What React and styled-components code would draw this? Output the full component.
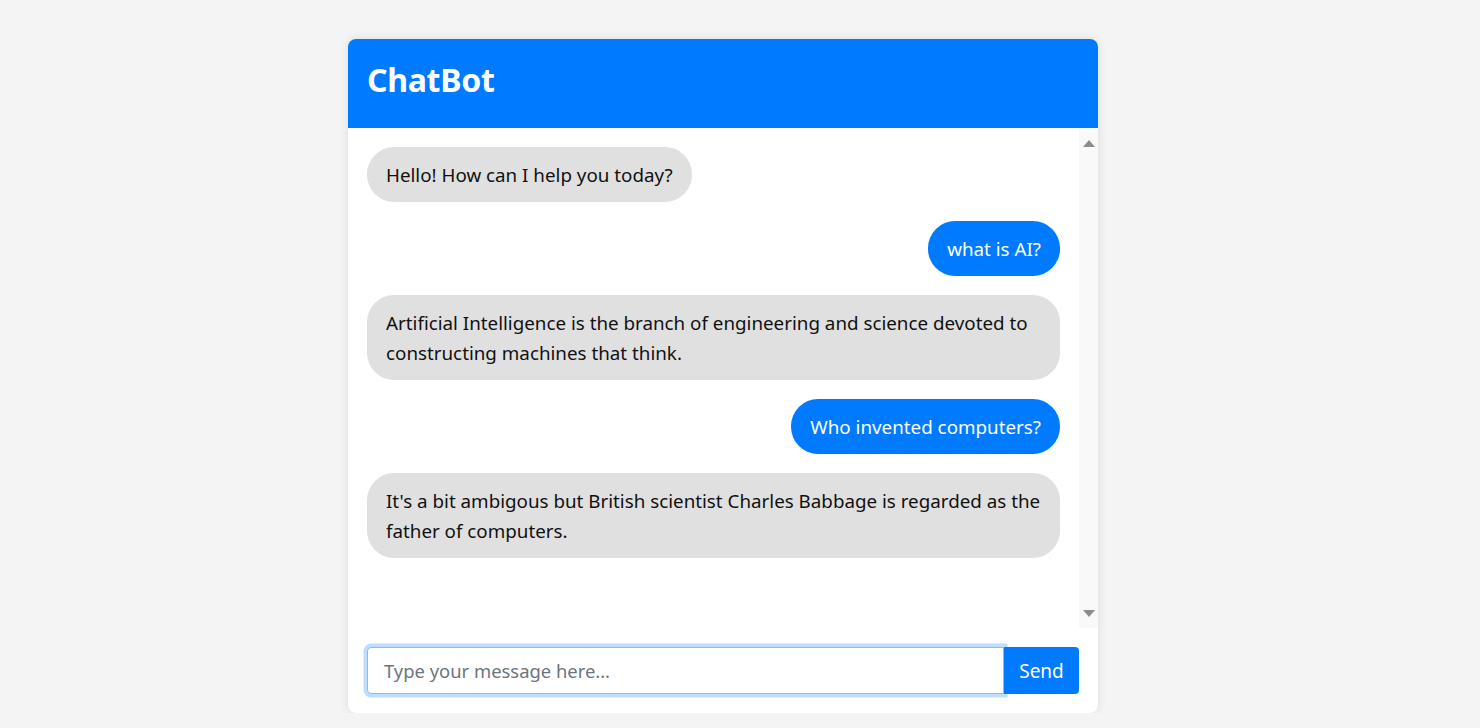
import React, { useState } from 'react';
import styled, { createGlobalStyle } from 'styled-components';

const initialMessages = [
  { id: 1, from: 'bot', text: 'Hello! How can I help you today?' },
  { id: 2, from: 'user', text: 'what is AI?' },
  {
    id: 3,
    from: 'bot',
    text: 'Artificial Intelligence is the branch of engineering and science devoted to constructing machines that think.',
  },
  { id: 4, from: 'user', text: 'Who invented computers?' },
  {
    id: 5,
    from: 'bot',
    text: "It's a bit ambigous but British scientist Charles Babbage is regarded as the father of computers.",
  },
];

const App = () => {
  const [messages] = useState(initialMessages);
  const [draft, setDraft] = useState('');

  return (
    <>
      <GlobalStyle />
      <Page>
        <Card>
          <Header>
            <Title>ChatBot</Title>
          </Header>
          <Body>
            <MessageList>
              {messages.map((m) => (
                <Row key={m.id} $user={m.from === 'user'}>
                  <Bubble $user={m.from === 'user'}>{m.text}</Bubble>
                </Row>
              ))}
            </MessageList>
            <Track>
              <Arrow $dir="up" />
              <Arrow $dir="down" />
            </Track>
          </Body>
          <Composer onSubmit={(e) => e.preventDefault()}>
            <Input
              autoFocus
              placeholder="Type your message here..."
              value={draft}
              onChange={(e) => setDraft(e.target.value)}
            />
            <SendButton type="submit">Send</SendButton>
          </Composer>
        </Card>
      </Page>
    </>
  );
};

const GlobalStyle = createGlobalStyle`
  body {
    margin: 0;
    background: #f4f4f4;
    font-family: 'Noto Sans', 'Open Sans', sans-serif;
  }
`;

const Page = styled.div`
  display: flex;
  justify-content: center;
  padding: 39px 34px 0 0;
`;

const Card = styled.div`
  width: 750px;
  background: #fff;
  border-radius: 8px;
  overflow: hidden;
  box-shadow: 0 0 10px rgba(0, 0, 0, 0.1);
`;

const Header = styled.div`
  background: #007bff;
  height: 89px;
  display: flex;
  align-items: center;
  padding: 0 19px 8px;
  box-sizing: border-box;
`;

const Title = styled.h1`
  margin: 0;
  color: #fff;
  font-size: 32px;
  font-weight: 700;
  letter-spacing: -0.3px;
`;

const Body = styled.div`
  display: flex;
  height: 500px;
`;

const MessageList = styled.div`
  flex: 1;
  padding: 19px;
  display: flex;
  flex-direction: column;
  gap: 19px;
  overflow: hidden;
`;

const Row = styled.div`
  display: flex;
  justify-content: ${(p) => (p.$user ? 'flex-end' : 'flex-start')};
`;

const Bubble = styled.div`
  padding: 13px 19px 12px;
  border-radius: 27px;
  font-size: 18.8px;
  line-height: 30px;
  background: ${(p) => (p.$user ? '#007bff' : '#e0e0e0')};
  color: ${(p) => (p.$user ? '#fff' : '#111')};
`;

const Track = styled.div`
  width: 19px;
  background: #f9f9f9;
  display: flex;
  flex-direction: column;
  justify-content: space-between;
  align-items: center;
  padding: 12px 0 11px;
  box-sizing: border-box;
`;

const Arrow = styled.span`
  width: 0;
  height: 0;
  border-left: 6.5px solid transparent;
  border-right: 6.5px solid transparent;
  ${(p) =>
    p.$dir === 'up'
      ? 'border-bottom: 7px solid #8c8c8c;'
      : 'border-top: 7px solid #8c8c8c;'}
`;

const Composer = styled.form`
  display: flex;
  padding: 19px;
  margin: 0;
`;

const Input = styled.input`
  flex: 1;
  height: 47px;
  box-sizing: border-box;
  padding: 8px 16px;
  font-family: inherit;
  font-size: 18.4px;
  color: #495057;
  border: 1px solid #80bdff;
  border-radius: 4px 0 0 4px;
  outline: none;
  box-shadow: 0 0 0 3.5px rgba(0, 123, 255, 0.25);

  &::placeholder {
    color: #6c757d;
  }
`;

const SendButton = styled.button`
  width: 75px;
  height: 47px;
  border: none;
  border-radius: 0 4px 4px 0;
  background: #007bff;
  color: #fff;
  font-family: inherit;
  font-size: 19px;
  cursor: pointer;
`;

export default App;
